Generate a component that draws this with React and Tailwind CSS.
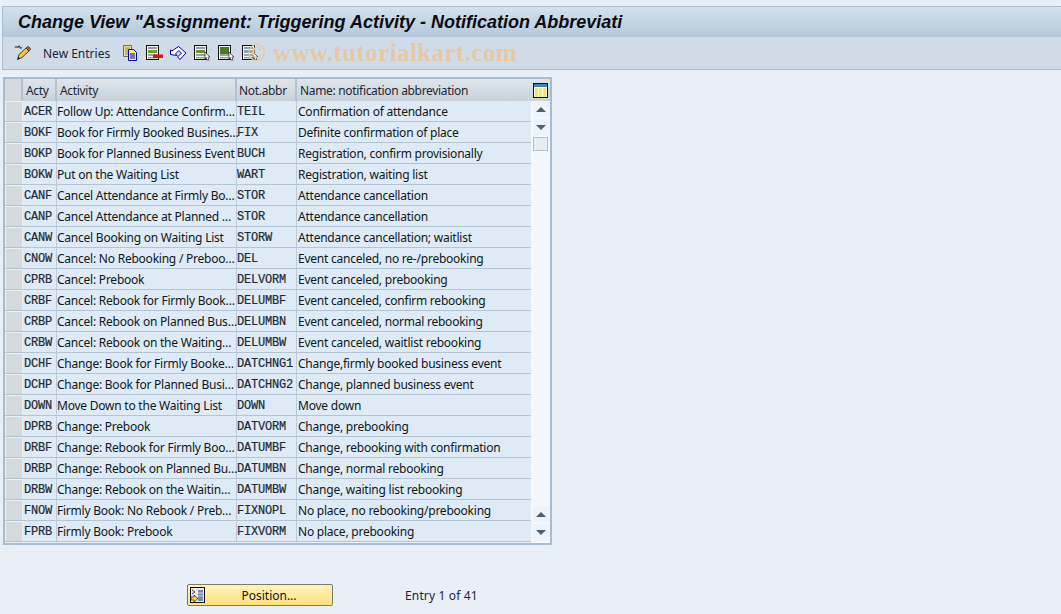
const rows = [
  ['ACER', 'Follow Up: Attendance Confirm…', 'TEIL', 'Confirmation of attendance'],
  ['BOKF', 'Book for Firmly Booked Busines…', 'FIX', 'Definite confirmation of place'],
  ['BOKP', 'Book for Planned Business Event', 'BUCH', 'Registration, confirm provisionally'],
  ['BOKW', 'Put on the Waiting List', 'WART', 'Registration, waiting list'],
  ['CANF', 'Cancel Attendance at Firmly Bo…', 'STOR', 'Attendance cancellation'],
  ['CANP', 'Cancel Attendance at Planned …', 'STOR', 'Attendance cancellation'],
  ['CANW', 'Cancel Booking on Waiting List', 'STORW', 'Attendance cancellation; waitlist'],
  ['CNOW', 'Cancel: No Rebooking / Preboo…', 'DEL', 'Event canceled, no re-/prebooking'],
  ['CPRB', 'Cancel: Prebook', 'DELVORM', 'Event canceled, prebooking'],
  ['CRBF', 'Cancel: Rebook for Firmly Book…', 'DELUMBF', 'Event canceled, confirm rebooking'],
  ['CRBP', 'Cancel: Rebook on Planned Bus…', 'DELUMBN', 'Event canceled, normal rebooking'],
  ['CRBW', 'Cancel: Rebook on the Waiting…', 'DELUMBW', 'Event canceled, waitlist rebooking'],
  ['DCHF', 'Change: Book for Firmly Booke…', 'DATCHNG1', 'Change,firmly booked business event'],
  ['DCHP', 'Change: Book for Planned Busi…', 'DATCHNG2', 'Change, planned business event'],
  ['DOWN', 'Move Down to the Waiting List', 'DOWN', 'Move down'],
  ['DPRB', 'Change: Prebook', 'DATVORM', 'Change, prebooking'],
  ['DRBF', 'Change: Rebook for Firmly Boo…', 'DATUMBF', 'Change, rebooking with confirmation'],
  ['DRBP', 'Change: Rebook on Planned Bu…', 'DATUMBN', 'Change, normal rebooking'],
  ['DRBW', 'Change: Rebook on the Waitin…', 'DATUMBW', 'Change, waiting list rebooking'],
  ['FNOW', 'Firmly Book: No Rebook / Preb…', 'FIXNOPL', 'No place, no rebooking/prebooking'],
  ['FPRB', 'Firmly Book: Prebook', 'FIXVORM', 'No place, prebooking'],
]

function PencilIcon() {
  return (
    <svg width="18" height="18" viewBox="0 0 18 18" fill="none">
      <path d="M1 3.500c1-2 2 .5 3-.5s1.500-1.500 2 .5 1.500-.5 2 .5" stroke="#333" strokeWidth="1.100" />
      <path d="M3.500 15.500l1.500-5 7-6.500 3 3-7 6.500z" fill="#f4c04a" stroke="#3a3020" strokeWidth="0.900" />
      <path d="M12 4l3 3 1.500-1.500c.5-.8-1.500-3-2.500-3z" fill="#e2512d" stroke="#3a3020" strokeWidth="0.800" />
      <path d="M3.500 15.500l.8-2.800 2 2z" fill="#222" />
    </svg>
  )
}

function CopyIcon() {
  return (
    <svg width="17" height="16" viewBox="0 0 17 16">
      <path d="M1.500 .5h8v11h-8z" fill="#efe08a" stroke="#6f6f5a" />
      <path d="M3 3h5M3 5h5M3 7h5M3 9h5" stroke="#8a8a58" />
      <path d="M6.500 4.500h5l3 3v8h-8z" fill="#ffef62" stroke="#0000c8" />
      <path d="M8 9h5M8 11h5M8 13h5" stroke="#0000c8" />
    </svg>
  )
}

function ListIcon({ top = '#7f9a22', arrow, minus, dark }) {
  return (
    <svg width="17" height="16" viewBox="0 0 17 16">
      <rect x="0.500" y="0.500" width="12" height="14" fill="#f5f5f5" stroke="#111" />
      {dark ? (
        <rect x="2" y="2" width="9" height="7" fill={top} />
      ) : (
        <>
          <rect x="2" y="2" width="9" height="2" fill="#8fa0a8" />
          <rect x="2" y="5" width="9" height="3" fill={top} />
        </>
      )}
      <rect x="2" y="9" width="9" height="2" fill="#8fa6b0" />
      <rect x="2" y="12" width="9" height="1.500" fill="#8fa6b0" />
      {minus && <rect x="7" y="9.500" width="10" height="3.500" fill="#e0101a" />}
      {arrow && <path d="M11 7l5 5h-2l1 3h-2l-1-2.500-1 1.500z" fill="#fff" stroke="#222" strokeWidth="0.700" />}
    </svg>
  )
}

function BackIcon() {
  return (
    <svg width="17" height="16" viewBox="0 0 17 16" fill="none">
      <path d="M.5 9.500V5l1.500 1L8.500 1.500 16 8l-6 6.500-2.500-2.500 4-4-2.800-2.500L5.500 9l1.500 1.500z" fill="#fff" stroke="#0000b0" strokeWidth="1" />
    </svg>
  )
}

function ColumnsIcon() {
  return (
    <svg width="15" height="15" viewBox="0 0 15 15">
      <rect x="0.500" y="0.500" width="14" height="14" fill="#fff" stroke="#111" />
      <rect x="1" y="1" width="13" height="3" fill="#4f7fb0" />
      <rect x="2" y="5" width="3" height="9" fill="#ffe640" />
      <rect x="6" y="5" width="3" height="9" fill="#ffe640" />
      <rect x="10" y="5" width="3" height="9" fill="#ffe640" />
    </svg>
  )
}

function PositionIcon() {
  return (
    <svg width="15" height="16" viewBox="0 0 15 16">
      <rect x="0.500" y="0.500" width="14" height="15" fill="#e8e8ee" stroke="#111" />
      <rect x="8" y="3" width="5" height="11" fill="#7d86ad" />
      <path d="M8 6h5M8 9h5" stroke="#d0d4e4" />
      <path d="M2 3l3 2-3 2" stroke="#444" fill="none" />
      <path d="M1 10h3V8l4 3.500L4 15v-2H1z" fill="#ffd83a" stroke="#222" strokeWidth="0.700" />
    </svg>
  )
}

function ScrollButton({ up }) {
  return (
    <div className="w-[16px] h-[16px] bg-[#edf3fa] flex items-center justify-center">
      <div className={up
        ? 'w-0 h-0 border-x-[5px] border-x-transparent border-b-[5px] border-b-[#4f6170]'
        : 'w-0 h-0 border-x-[5px] border-x-transparent border-t-[5px] border-t-[#4f6170]'} />
    </div>
  )
}

function HeaderCell({ className, children }) {
  return (
    <div className={`h-full pt-px flex items-center border-r-2 border-r-[#b3c2d0] whitespace-nowrap tracking-[-0.32px] ${className}`}>
      {children}
    </div>
  )
}

function Row({ r }) {
  return (
    <div className="h-[21px] flex border-b border-b-[#b4c4d3] bg-[#deeaf5] text-[#101820] whitespace-nowrap tracking-[-0.23px] leading-[21px]">
      <div className="w-[18px] shrink-0 bg-[#eaf0f7] pl-px pt-px">
        <div className="w-[16px] h-[19px] bg-[#d5dade]" />
      </div>
      <div className="w-[33px] shrink-0 pl-px leading-[23px] font-['Liberation_Mono',monospace] tracking-[-0.2px] text-[#1f2a35] [-webkit-text-stroke:0.2px_#1f2a35]">{r[0]}</div>
      <div className="w-[181px] shrink-0 border-x border-x-[#bccad7]">{r[1]}</div>
      <div className="w-[60px] shrink-0 border-r border-r-[#bccad7] leading-[23px] font-['Liberation_Mono',monospace] tracking-[-0.2px] text-[#1f2a35] [-webkit-text-stroke:0.2px_#1f2a35]">{r[2]}</div>
      <div className="flex-1 pl-px">{r[3]}</div>
    </div>
  )
}

export default function App() {
  return (
    <div className="w-[1061px] h-[614px] overflow-hidden bg-[#e8eff7] pt-[6px] font-['Noto_Sans',sans-serif] text-[12px]">
      <div className="ml-[2px] border-l border-l-[#a9bccd]">
        <div className="h-[31px] border-t border-t-[#a9bccd] bg-gradient-to-b from-[#d5e1ec] to-[#b4c8da] flex items-center pl-[15px] font-['Liberation_Sans',sans-serif] font-bold italic text-[18px] text-[#0b0b12] whitespace-nowrap overflow-hidden">
          Change View "Assignment: Triggering Activity - Notification Abbreviati
        </div>
        <div className="h-[33px] bg-[#cfdce8] border-b border-b-[#a9bccd] flex items-center pl-[11px]">
          <PencilIcon />
          <span className="ml-[11px] pt-px text-[#1c2440]">New Entries</span>
          <div className="ml-[12px] flex items-center gap-[7px]">
            <CopyIcon />
            <ListIcon minus />
            <BackIcon />
            <ListIcon top="#6d8f1e" arrow />
            <ListIcon top="#4c7a12" arrow dark />
            <ListIcon top="#8fa0a8" arrow />
          </div>
          <span className="ml-[-12px] font-['Liberation_Serif',serif] font-bold text-[25px] text-[#e7c8a2] tracking-[0.4px] whitespace-nowrap">© www.tutorialkart.com</span>
        </div>
      </div>

      <div className="mt-[7px] ml-[3px] w-[549px] h-[468px] border-2 border-[#a9bccd] bg-[#e8eff7] flex flex-col">
        <div className="h-[22px] flex shrink-0 bg-gradient-to-b from-[#dfe5ea] to-[#c9d2da] text-[#1c2733]">
          <div className="w-[18px] shrink-0 border-r-2 border-r-[#b3c2d0] bg-[#d5dade]" />
          <HeaderCell className="w-[34px] pl-[3px]">Acty</HeaderCell>
          <HeaderCell className="w-[180px] pl-[3px]">Activity</HeaderCell>
          <HeaderCell className="w-[60px] pl-[2px]">Not.abbr</HeaderCell>
          <div className="flex-1 h-full pt-px flex items-center pl-[3px] whitespace-nowrap tracking-[-0.32px]">Name: notification abbreviation</div>
          <div className="w-[19px] shrink-0 flex items-center justify-center">
            <ColumnsIcon />
          </div>
        </div>
        <div className="flex flex-1 min-h-0">
          <div className="flex-1 min-w-0">
            {rows.map((r) => <Row key={r[0]} r={r} />)}
          </div>
          <div className="w-[19px] shrink-0 bg-[#f4f7fb] flex flex-col items-center gap-[2px] pb-[3px]">
            <ScrollButton up />
            <ScrollButton />
            <div className="w-[15px] h-[14px] bg-[#e6edf5] border border-[#b3c2d0]" />
            <div className="flex-1" />
            <ScrollButton up />
            <ScrollButton />
          </div>
        </div>
      </div>

      <div className="mt-[39px] flex items-center">
        <button className="ml-[187px] w-[146px] h-[22px] pl-[18px] pt-px relative rounded-[2px] border border-[#7a7a70] bg-gradient-to-b from-[#fff3b8] to-[#ffe27e] text-[#11131c] flex items-center justify-center">
          <span className="absolute left-[2px] top-[2px]"><PositionIcon /></span>
          Position...
        </button>
        <span className="ml-[72px] pt-[2px] text-[#1c2440] tracking-[0.15px]">Entry 1 of 41</span>
      </div>
    </div>
  )
}
